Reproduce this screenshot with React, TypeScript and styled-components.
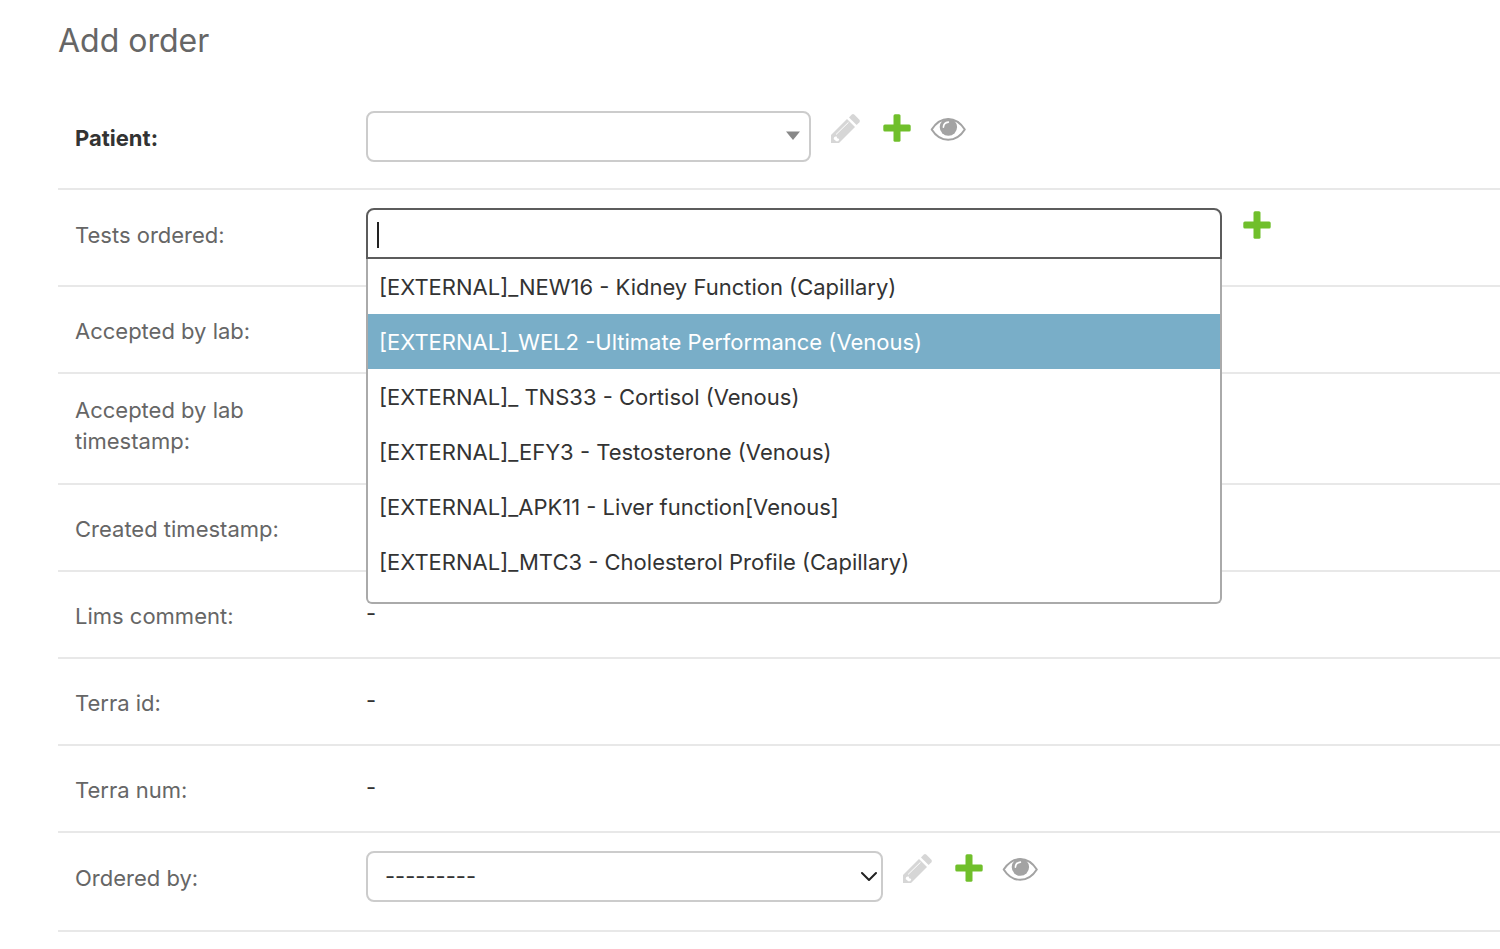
import React from "react";
import styled, { createGlobalStyle } from "styled-components";

const GlobalStyle = createGlobalStyle`
  *, *::before, *::after { box-sizing: border-box; }
  body {
    margin: 0;
    background: #fff;
    color: #333;
    font-family: Inter, Roboto, "Liberation Sans", sans-serif;
    font-size: 22px;
    line-height: 31px;
  }
`;

const Page = styled.main`
  padding: 20px 0 0 58px;
  overflow: hidden;
`;

const Title = styled.h1`
  margin: 0 0 31px;
  color: #666;
  font-size: 32px;
  font-weight: 400;
  line-height: 42px;
`;

const Row = styled.div<{ $roomy?: boolean }>`
  display: flex;
  align-items: flex-start;
  padding: 18px 0 ${(p) => (p.$roomy ? 28 : 18)}px 17px;
  border-bottom: 2px solid #e8e8e8;
`;

const Label = styled.label<{ $required?: boolean }>`
  flex: 0 0 291px;
  padding: 12px 64px 0 0;
  color: ${(p) => (p.$required ? "#333" : "#666")};
  font-weight: ${(p) => (p.$required ? 700 : 400)};
`;

const Term = styled.span<{ $wraps: boolean }>`
  flex: 0 0 291px;
  padding: ${(p) => (p.$wraps ? "3px 64px 8px 0" : "11px 0 0")};
  color: #666;
`;

const Value = styled.div`
  min-height: 49px;
  padding-top: 8px;
`;

const Field = styled.div<{ $spaced?: boolean }>`
  display: flex;
  align-items: flex-start;
  gap: 17px;
  margin-bottom: ${(p) => (p.$spaced ? 8 : 0)}px;
`;

const Control = styled.div<{ $width: number }>`
  position: relative;
  width: ${(p) => p.$width}px;
`;

const Select = styled.select`
  appearance: none;
  display: block;
  width: 100%;
  height: 51px;
  padding: 0 40px 0 17px;
  border: 2px solid #ccc;
  border-radius: 8px;
  background: #fff;
  color: #333;
  font: inherit;
`;

const SearchInput = styled.input`
  display: block;
  width: 100%;
  height: 51px;
  padding: 0 12px;
  border: 2px solid #5c5c5c;
  border-radius: 8px 8px 0 0;
  background: #fff;
  color: #333;
  font: inherit;
  caret-color: transparent;
  outline: none;
`;

const Caret = styled.span`
  position: absolute;
  top: 14px;
  left: 11px;
  width: 2px;
  height: 26px;
  background: #222;
`;

const Arrow = styled.svg`
  position: absolute;
  top: 20px;
  right: 6px;
  pointer-events: none;
`;

const Triangle = styled(Arrow)`
  right: 10px;
`;

const Menu = styled.ul`
  position: absolute;
  z-index: 2;
  top: 51px;
  left: 0;
  right: 0;
  height: 345px;
  margin: 0;
  padding: 0;
  overflow: hidden;
  list-style: none;
  background: #fff;
  border: 2px solid #aaa;
  border-top: 0;
  border-radius: 0 0 6px 6px;
`;

const Option = styled.li<{ $active: boolean }>`
  padding: 13px 11px 11px;
  background: ${(p) => (p.$active ? "#79aec8" : "transparent")};
  color: ${(p) => (p.$active ? "#fff" : "#333")};
  white-space: nowrap;
`;

const Actions = styled.div`
  display: flex;
  gap: 15px;
`;

const IconLink = styled.a`
  display: block;
  width: 36px;
  height: 36px;
  svg { display: block; }
`;

const PencilIcon = () => (
  <svg width="36" height="36" viewBox="0 0 36 36" aria-hidden="true">
    <path d="M3 32V24L19 8l8 8L11 32Z" fill="#d6d6d6" />
    <path d="M21 6.500 23.800 3.600Q25 2.500 26.200 3.600L31.400 8.800Q32.500 10 31.400 11.200L28.600 14Z" fill="#d6d6d6" />
    <path d="M8 23.500 20.500 11.300" stroke="#fff" strokeWidth="1" fill="none" />
    <path d="M6.300 26 8.400 25.300 9.300 27.200 11.300 28 10.300 30.200 8.300 30.200 5.600 28Z" fill="#fff" />
  </svg>
);

const PlusIcon = () => (
  <svg width="36" height="36" viewBox="0 0 36 36" aria-hidden="true">
    <rect x="14.500" y="3.300" width="7" height="27.400" rx="1.500" fill="#70bf2b" />
    <rect x="4.300" y="13.500" width="27.400" height="7" rx="1.500" fill="#70bf2b" />
  </svg>
);

const EyeIcon = () => (
  <svg width="36" height="36" viewBox="0 0 36 36" aria-hidden="true">
    <path d="M1.700 18.500C6 11.800 11.500 8 18.200 8S30.500 11.800 34.800 18.500C30.500 25.300 25 28.800 18.200 28.800S6 25.300 1.700 18.500Z" fill="#fff" stroke="#a3a3a3" strokeWidth="2" strokeLinejoin="round" />
    <circle cx="18.400" cy="16.100" r="8.700" fill="#a3a3a3" />
    <path d="M13.400 16.300Q13.600 11.600 18.400 11.100" fill="none" stroke="#fff" strokeWidth="1.600" strokeLinecap="round" />
  </svg>
);

const RelatedActions = ({ name }: { name: string }) => (
  <Actions>
    <IconLink href="#change" aria-label={`Change selected ${name}`}><PencilIcon /></IconLink>
    <IconLink href="#add" aria-label={`Add another ${name}`}><PlusIcon /></IconLink>
    <IconLink href="#view" aria-label={`View selected ${name}`}><EyeIcon /></IconLink>
  </Actions>
);

const ReadOnlyRow = ({ label, wraps = false }: { label: string; wraps?: boolean }) => (
  <Row>
    <Term $wraps={wraps}>{label}</Term>
    <Value>-</Value>
  </Row>
);

const tests = [
  "[EXTERNAL]_NEW16 - Kidney Function (Capillary)",
  "[EXTERNAL]_WEL2 -Ultimate Performance (Venous)",
  "[EXTERNAL]_ TNS33 - Cortisol (Venous)",
  "[EXTERNAL]_EFY3 - Testosterone (Venous)",
  "[EXTERNAL]_APK11 - Liver function[Venous]",
  "[EXTERNAL]_MTC3 - Cholesterol Profile (Capillary)",
];

export default function App() {
  return (
    <>
      <GlobalStyle />
      <Page>
        <Title>Add order</Title>
        <form>
          <Row>
            <Label htmlFor="patient" $required>Patient:</Label>
            <Field $spaced>
              <Control $width={445}>
                <Select id="patient" defaultValue="">
                  <option value="" />
                </Select>
                <Triangle width="17" height="10" viewBox="0 0 17 10" aria-hidden="true">
                  <path d="M2 0.500H16L9 9Z" fill="#888" />
                </Triangle>
              </Control>
              <RelatedActions name="patient" />
            </Field>
          </Row>
          <Row>
            <Label htmlFor="tests">Tests ordered:</Label>
            <Field $spaced>
              <Control $width={856}>
                <SearchInput id="tests" type="text" role="combobox" aria-expanded="true" aria-controls="test-options" autoComplete="off" />
                <Caret />
                <Menu id="test-options" role="listbox">
                  {tests.map((test, i) => (
                    <Option key={test} role="option" aria-selected={i === 1} $active={i === 1}>{test}</Option>
                  ))}
                </Menu>
              </Control>
              <Actions>
                <IconLink href="#add" aria-label="Add another test"><PlusIcon /></IconLink>
              </Actions>
            </Field>
          </Row>
          <ReadOnlyRow label="Accepted by lab:" />
          <ReadOnlyRow label="Accepted by lab timestamp:" wraps />
          <ReadOnlyRow label="Created timestamp:" />
          <ReadOnlyRow label="Lims comment:" />
          <ReadOnlyRow label="Terra id:" />
          <ReadOnlyRow label="Terra num:" />
          <Row $roomy>
            <Label htmlFor="ordered-by">Ordered by:</Label>
            <Field>
              <Control $width={517}>
                <Select id="ordered-by" defaultValue="">
                  <option value="">---------</option>
                </Select>
                <Arrow width="17" height="11" viewBox="0 0 17 11" aria-hidden="true">
                  <path d="M2 2 9 9 16 2" fill="none" stroke="#222" strokeWidth="2" strokeLinecap="round" strokeLinejoin="round" />
                </Arrow>
              </Control>
              <RelatedActions name="user" />
            </Field>
          </Row>
        </form>
      </Page>
    </>
  );
}
